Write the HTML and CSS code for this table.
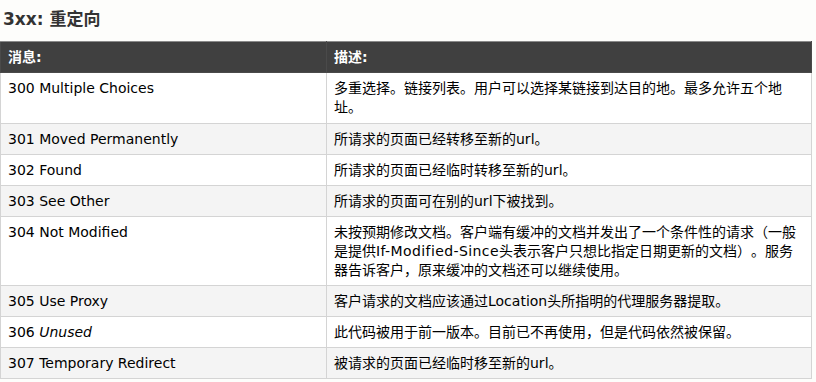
FILE: index.html
```html
<!DOCTYPE html>
<html lang="zh-CN">
<head>
<meta charset="utf-8">
<title>3xx: 重定向</title>
<link rel="stylesheet" href="styles.css">
</head>
<body>
<h2 class="title">3xx: 重定向</h2>
<table class="ref">
  <thead>
    <tr><th class="c1">消息:</th><th class="c2">描述:</th></tr>
  </thead>
  <tbody>
    <tr><td>300 Multiple Choices</td><td>多重选择。链接列表。用户可以选择某链接到达目的地。最多允许五个地址。</td></tr>
    <tr><td>301 Moved Permanently</td><td>所请求的页面已经转移至新的url。</td></tr>
    <tr><td>302 Found</td><td>所请求的页面已经临时转移至新的url。</td></tr>
    <tr><td>303 See Other</td><td>所请求的页面可在别的url下被找到。</td></tr>
    <tr><td>304 Not Modified</td><td>未按预期修改文档。客户端有缓冲的文档并发出了一个条件性的请求（一般是提供<span class="en">If-Modified-Since</span>头表示客户只想比指定日期更新的文档）。服务器告诉客户，原来缓冲的文档还可以继续使用。</td></tr>
    <tr><td>305 Use Proxy</td><td>客户请求的文档应该通过Location头所指明的代理服务器提取。</td></tr>
    <tr><td>306 <i>Unused</i></td><td>此代码被用于前一版本。目前已不再使用，但是代码依然被保留。</td></tr>
    <tr><td>307 Temporary Redirect</td><td>被请求的页面已经临时移至新的url。</td></tr>
  </tbody>
</table>
</body>
</html>
```
FILE: styles.css
```css
html, body {
  margin: 0;
  padding: 0;
  background: #fdfdfb;
}
body {
  font-family: Verdana, "DejaVu Sans", "Noto Sans CJK SC", sans-serif;
  color: #222;
  width: 812px;
}
.title {
  margin: 0;
  padding: 7px 0 0 3px;
  height: 41px;
  box-sizing: border-box;
  font-size: 17px;
  line-height: 24px;
  font-weight: bold;
  color: #333;
}
.ref {
  width: 812px;
  border-collapse: collapse;
  table-layout: fixed;
  font-size: 14px;
  line-height: 19px;
  text-spacing-trim: space-all;
}
.ref th {
  background: #404040;
  color: #fff;
  text-align: left;
  font-weight: bold;
  padding: 6px 7px 5px 7px;
  border: 1px solid #4a4a4a;
  border-top-color: #8a8a8a;
}
.ref .c1 { width: 311px; }
.ref td {
  vertical-align: top;
  padding: 6px 7px 5px 7px;
  border: 1px solid #d4d4d4;
  background: #fff;
  color: #000;
}
.ref td + td {
  padding-right: 9px;
}
.ref tbody tr:first-child td {
  padding-bottom: 6px;
}
.ref tbody tr:nth-child(even) td {
  background: #f4f4f4;
}
.ref .en {
  letter-spacing: 0.4px;
}
```
